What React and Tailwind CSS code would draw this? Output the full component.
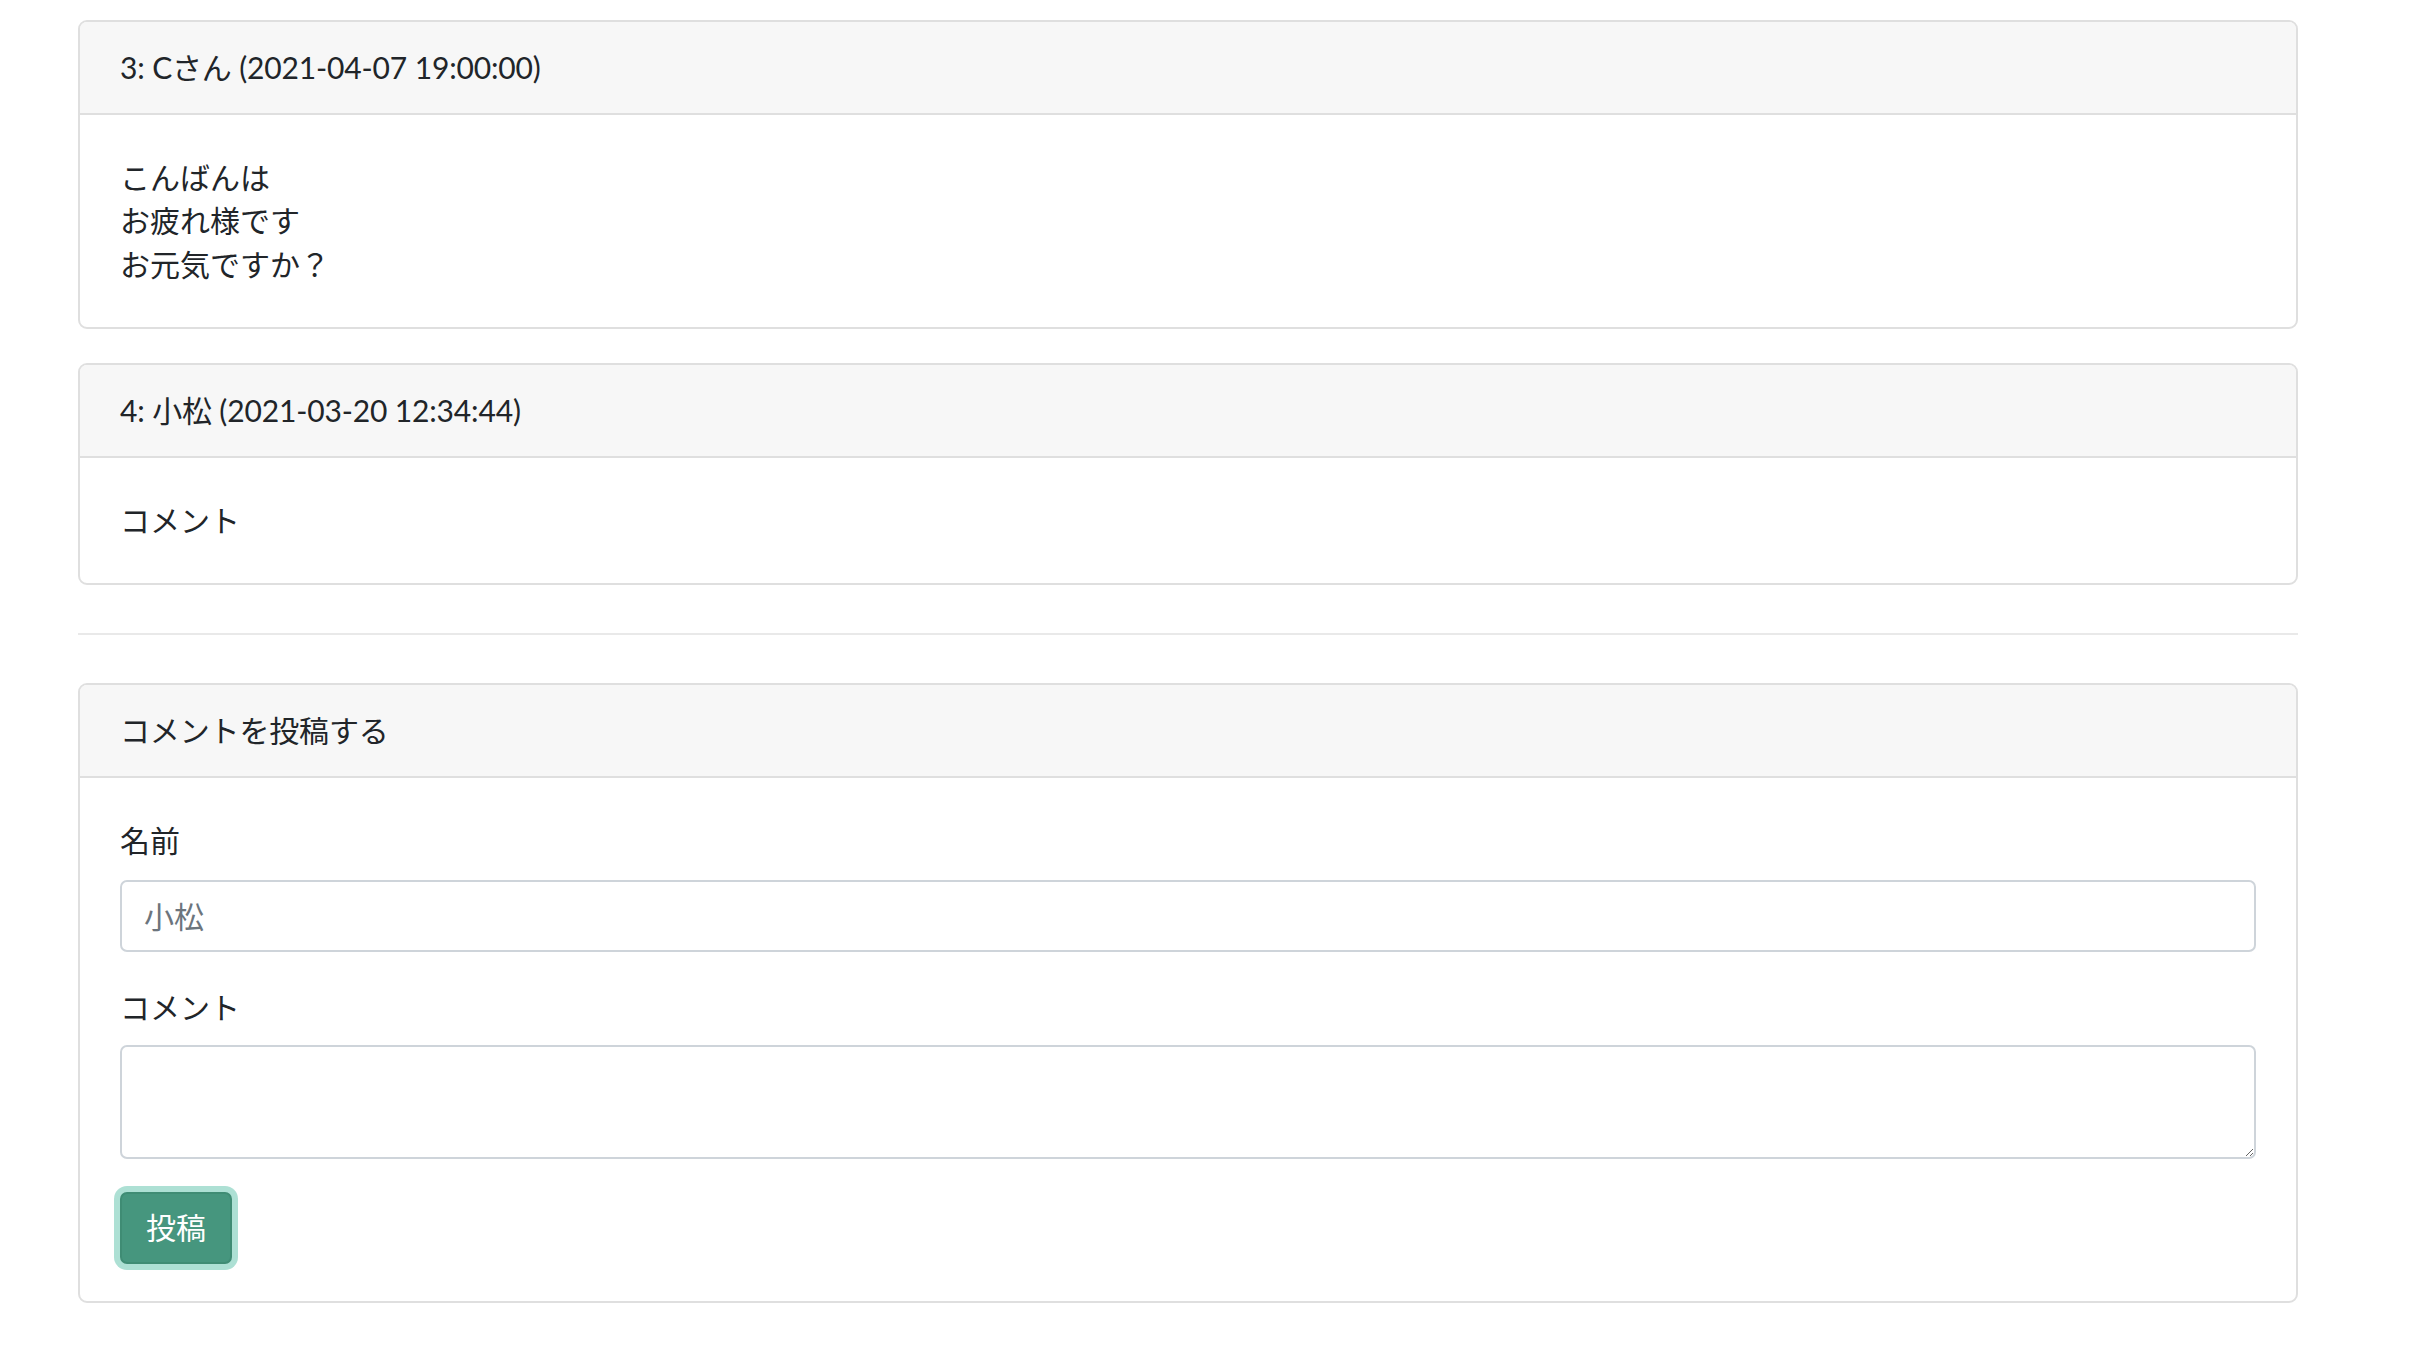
import React, { useState } from "react";

const COMMENTS = [
  { id: 3, name: "Cさん", date: "2021-04-07 19:00:00", body: "こんばんは\nお疲れ様です\nお元気ですか？" },
  { id: 4, name: "小松", date: "2021-03-20 12:34:44", body: "コメント" }
];

function Card({ title, children, bodyClass = "py-[41px]" }) {
  return (
    <div className="border-2 border-[#dfdfdf] rounded-[9px] overflow-hidden bg-white">
      <div className="h-[93px] flex items-center px-[40px] bg-[#f7f7f7] border-b-2 border-[#dfdfdf] tracking-[-0.15px]">
        {title}
      </div>
      <div className={`px-[40px] ${bodyClass}`}>{children}</div>
    </div>
  );
}

export default function App() {
  const [name, setName] = useState("");
  const [text, setText] = useState("");

  return (
    <div
      className="min-h-screen bg-white text-[#212529] text-[30px] leading-[43.3px] pt-[20px] pb-[40px]"
      style={{ fontFamily: 'Lato, "Noto Sans CJK JP", sans-serif' }}
    >
      <div className="ml-[78px] w-[2220px]">
        <div className="flex flex-col gap-[34px]">
          {COMMENTS.map(c => (
            <Card key={c.id} title={`${c.id}: ${c.name} (${c.date})`}>
              <p className="whitespace-pre-line">{c.body}</p>
            </Card>
          ))}
        </div>

        <hr className="mt-[48px] mb-[48px] border-t-2 border-[#e9e9e9]" />

        {/* 投稿フォーム */}
        <Card title="コメントを投稿する" bodyClass="pt-[41px] pb-[37px]">
          <form onSubmit={e => e.preventDefault()}>
            <label className="block mb-[18px]">名前</label>
            <input
              type="text"
              value={name}
              onChange={e => setName(e.target.value)}
              placeholder="小松"
              className="block w-full h-[72px] px-[22px] border-2 border-[#ced4da] rounded-[7px] placeholder:text-[#6c757d] outline-none"
            />
            <label className="block mt-[34px] mb-[15px]">コメント</label>
            <textarea
              value={text}
              onChange={e => setText(e.target.value)}
              className="block w-full h-[114px] px-[22px] py-[10px] border-2 border-[#ced4da] rounded-[7px] outline-none"
            />
            <button
              type="submit"
              className="mt-[33px] h-[72px] px-[24px] rounded-[7px] bg-[#46967e] border-2 border-[#3f8c74] text-white shadow-[0_0_0_6px_#ade0d4]"
            >
              投稿
            </button>
          </form>
        </Card>
      </div>
    </div>
  );
}
